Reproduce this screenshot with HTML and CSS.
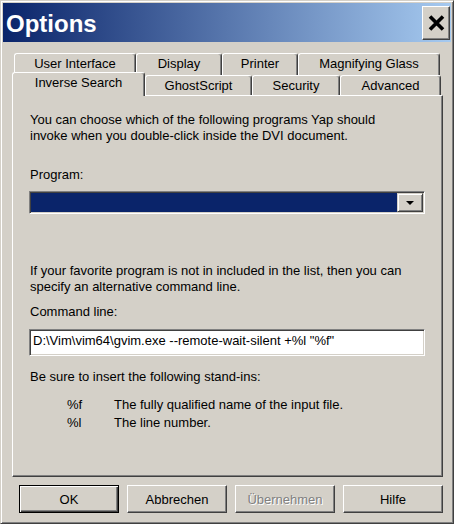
FILE: index.html
```html
<!DOCTYPE html>
<html lang="en">
<head>
    <meta charset="UTF-8">
    <meta name="viewport" content="width=device-width, initial-scale=1.0">
    <title>Options</title>
    <link rel="stylesheet" href="styles.css">
</head>
<body>

<div class="window">
    <div class="titlebar">
        <span class="title">Options</span>
        <button class="close-btn" type="button">
            <svg width="17" height="16" viewBox="0 0 17 16">
                <path d="M2 1.5 L15 14.5 M15 1.5 L2 14.5" stroke="#000" stroke-width="3.6" fill="none"/>
            </svg>
        </button>
    </div>

    <div class="dialog">
        <div class="tabs">
            <div class="tab-row back">
                <div class="tab tab-ui">User Interface</div>
                <div class="tab tab-display">Display</div>
                <div class="tab tab-printer">Printer</div>
                <div class="tab tab-magnify">Magnifying Glass</div>
            </div>
            <div class="tab-row front">
                <div class="tab tab-inverse active">Inverse Search</div>
                <div class="tab tab-ghost">GhostScript</div>
                <div class="tab tab-security">Security</div>
                <div class="tab tab-advanced">Advanced</div>
            </div>
        </div>

        <div class="panel">
            <p class="text">You can choose which of the following programs Yap should<br>invoke when you double-click inside the DVI document.</p>

            <label class="label label-program">Program:</label>
            <div class="combo">
                <div class="combo-value"></div>
                <div class="combo-arrow">
                    <svg width="8" height="4" viewBox="0 0 8 4"><path d="M0 0 H8 L4 4 Z" fill="#000"/></svg>
                </div>
            </div>

            <p class="text text-alt">If your favorite program is not in included in the list, then you can<br>specify an alternative command line.</p>

            <label class="label label-cmd" for="cmd">Command line:</label>
            <input class="cmd-input" id="cmd" type="text" value='D:\Vim\vim64\gvim.exe --remote-wait-silent +%l "%f"'>

            <p class="text text-standins">Be sure to insert the following stand-ins:</p>
            <div class="standins">
                <span>%f</span><span>The fully qualified name of the input file.</span>
                <span>%l</span><span>The line number.</span>
            </div>
        </div>

        <div class="buttons">
            <button class="btn default" type="button">OK</button>
            <button class="btn" type="button">Abbrechen</button>
            <button class="btn disabled" type="button">Übernehmen</button>
            <button class="btn" type="button">Hilfe</button>
        </div>
    </div>
</div>

</body>
</html>
```
FILE: styles.css
```css
* {
    box-sizing: border-box;
}
body {
    margin: 0;
    background: #d4d0c8;
    font-family: "Liberation Sans", Arial, sans-serif;
    font-size: 13px;
    color: #000;
}
.window {
    width: 454px;
    height: 524px;
    padding: 2px 2px 0 2px;
    background: #d4d0c8;
    border: 1px solid;
    border-color: #d4d0c8 #404040 #404040 #d4d0c8;
    box-shadow: inset 1px 1px #fff, inset -1px -1px #808080;
}

/* title bar */
.titlebar {
    height: 39px;
    display: flex;
    align-items: center;
    justify-content: space-between;
    padding-left: 3px;
    padding-right: 1px;
    background: linear-gradient(to right, #0a246a, #a6caf0);
}
.title {
    color: #fff;
    font-size: 24px;
    font-weight: bold;
    line-height: 1;
    padding-top: 2px;
}
.close-btn {
    width: 28px;
    height: 34px;
    padding: 0;
    display: flex;
    align-items: center;
    justify-content: center;
    background: #d4d0c8;
    border: 1px solid;
    border-color: #fff #404040 #404040 #fff;
    box-shadow: inset -1px -1px #808080;
}

/* dialog body */
.dialog {
    padding: 11px 0 0 9px;
}
.tab-row {
    display: flex;
}
.tab-row.back {
    height: 22px;
    padding-left: 2px;
}
.tab-row.front {
    height: 20px;
    align-items: flex-end;
}
.tab {
    height: 100%;
    text-align: center;
    background: #d4d0c8;
    border-top: 1px solid #fff;
    border-left: 1px solid #fff;
    border-right: 1px solid #404040;
    border-radius: 3px 3px 0 0;
    box-shadow: inset -1px 0 #808080;
    line-height: 19px;
}
.back .tab {
    line-height: 20px;
}
.tab.active {
    height: 24px;
    margin-bottom: -1px;
    line-height: 20px;
    position: relative;
    z-index: 1;
}
.tab-ui { width: 122px; }
.tab-display { width: 86px; }
.tab-printer { width: 76px; }
.tab-magnify { width: 142px; }
.tab-inverse { width: 133px; }
.tab-ghost { width: 107px; }
.tab-security { width: 88px; }
.tab-advanced { width: 101px; }

.panel {
    width: 431px;
    height: 382px;
    padding: 16px 0 0 17px;
    border: 1px solid;
    border-color: #fff #404040 #404040 #fff;
    box-shadow: inset -1px -1px #808080;
}
.text {
    margin: 0;
    line-height: 16px;
}
.label {
    display: block;
    line-height: 16px;
}
.label-program {
    margin-top: 23px;
}
.combo {
    width: 396px;
    height: 23px;
    margin: 8px 0 0 -1px;
    padding: 1px;
    display: flex;
    border: 1px solid;
    border-color: #808080 #fff #fff #808080;
    box-shadow: inset 1px 1px #404040, inset -1px -1px #d4d0c8;
}
.combo-value {
    flex: 1;
    background: #0a246a;
}
.combo-arrow {
    width: 26px;
    display: flex;
    align-items: center;
    justify-content: center;
    background: #d4d0c8;
    border: 1px solid;
    border-color: #d4d0c8 #404040 #404040 #d4d0c8;
    box-shadow: inset 1px 1px #fff, inset -1px -1px #808080;
}
.text-alt {
    margin-top: 49px;
}
.label-cmd {
    margin-top: 9px;
}
.cmd-input {
    display: block;
    width: 396px;
    height: 27px;
    margin: 9px 0 0 -1px;
    padding: 0 3px 5px 3px;
    font-family: inherit;
    font-size: 13px;
    color: #000;
    background: #fff;
    border: 1px solid;
    border-color: #808080 #fff #fff #808080;
    box-shadow: inset 1px 1px #404040, inset -1px -1px #d4d0c8;
    outline: none;
}
.text-standins {
    margin-top: 13px;
}
.standins {
    display: grid;
    grid-template-columns: 47px auto;
    padding-left: 37px;
    margin-top: 11px;
    line-height: 18px;
}

/* bottom buttons */
.buttons {
    width: 431px;
    display: flex;
    justify-content: flex-end;
    gap: 8px;
    margin-top: 8px;
}
.btn {
    width: 100px;
    height: 28px;
    padding: 0;
    font-family: inherit;
    font-size: 13px;
    color: #000;
    background: #d4d0c8;
    border: 1px solid;
    border-color: #fff #404040 #404040 #fff;
    box-shadow: inset -1px -1px #808080;
}
.btn.default {
    border-color: #000;
    box-shadow: inset 1px 1px #fff, inset -1px -1px #404040, inset -2px -2px #808080;
}
.btn.disabled {
    color: #808080;
    text-shadow: 1px 1px #fff;
}
```
